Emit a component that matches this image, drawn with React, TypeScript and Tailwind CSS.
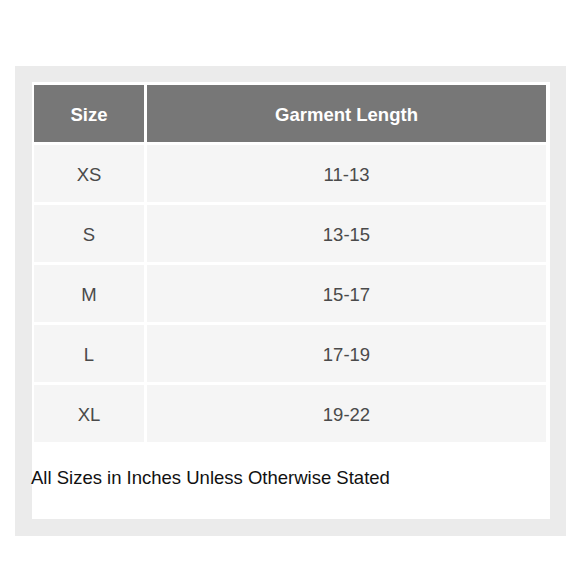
const rows: [string, string][] = [
  ["XS", "11-13"],
  ["S", "13-15"],
  ["M", "15-17"],
  ["L", "17-19"],
  ["XL", "19-22"],
];

export default function App() {
  return (
    <div className="w-[580px] h-[580px] bg-white pt-[66px] pl-[15px] font-['Liberation_Sans',Arial,sans-serif]">
      <div className="w-[551px] h-[470px] bg-[#ebebeb] pt-[16px] pl-[17px]">
        <div className="w-[518px] h-[437px] bg-white pt-[3px] pl-[2px]">
          <div className="w-[512px] grid grid-cols-[110px_1fr] gap-[3px]">
            <div className="h-[57px] pt-[2px] bg-[#777777] text-white font-bold text-[18.5px] flex items-center justify-center">
              Size
            </div>
            <div className="h-[57px] pt-[2px] bg-[#777777] text-white font-bold text-[18.5px] flex items-center justify-center">
              Garment Length
            </div>
            {rows.map(([size, len]) => (
              <>
                <div key={size + "a"} className="h-[57px] pt-[3px] bg-[#f5f5f5] text-[#4a4a4a] text-[18.5px] flex items-center justify-center">
                  {size}
                </div>
                <div key={size + "b"} className="h-[57px] pt-[3px] bg-[#f5f5f5] text-[#4a4a4a] text-[18.5px] flex items-center justify-center">
                  {len}
                </div>
              </>
            ))}
          </div>
          <p className="mt-[22px] -ml-[3px] text-[18.5px] text-[#111]">
            All Sizes in Inches Unless Otherwise Stated
          </p>
        </div>
      </div>
    </div>
  );
}
